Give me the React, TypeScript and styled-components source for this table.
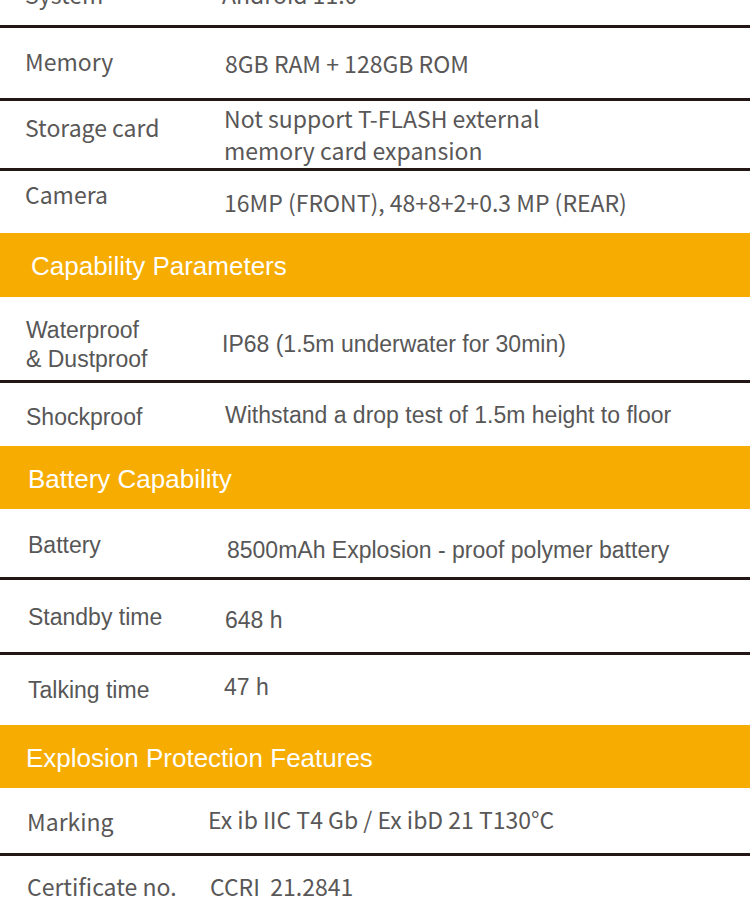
import React from 'react';
import styled, {createGlobalStyle} from "styled-components";

const GlobalStyle = createGlobalStyle`
    html, body {
        margin: 0;
        padding: 0;
        background: #fff;
    }
    body {
        width: 750px;
        overflow: hidden;
    }
`

type FontKind = 'hans' | 'arial'

// font stacks + numbers used to put a baseline where the picture has it
const fonts = {
    hans: {family: `"Noto Sans CJK SC", "Noto Sans", sans-serif`, size: 23, asc: 1.16, desc: 0.288},
    arial: {family: `"Liberation Sans", Arial, sans-serif`, size: 23, asc: 0.905, desc: 0.212},
}
const LINE = 29

const baselineOffset = (kind: FontKind, lh: number) => {
    const f = fonts[kind]
    return (lh - (f.asc + f.desc) * f.size) / 2 + f.asc * f.size
}

const Page = styled.div`
    width: 750px;
    margin-top: -42px;
    background: #fff;
`
const Section = styled.section`
    display: flex;
    flex-direction: column;
`
const Header = styled.div<{ $x: number; $b: number }>`
    height: 64px;
    box-sizing: border-box;
    background: #f6ac00;
    color: #fff;
    font-family: "Liberation Sans", Arial, sans-serif;
    font-size: 26px;
    line-height: 30px;
    padding-left: ${p => p.$x}px;
    padding-top: ${p => p.$b - ((30 - 1.117 * 26) / 2 + 0.905 * 26)}px;
    white-space: nowrap;
`
const Row = styled.div<{ $h: number; $line?: boolean }>`
    display: flex;
    height: ${p => p.$h}px;
    box-sizing: border-box;
    border-bottom: ${p => (p.$line ? '3px solid #231815' : 'none')};
`
const Cell = styled.div<{ $font: FontKind; $x: number; $b: number; $lh: number }>`
    font-family: ${p => fonts[p.$font].family};
    font-size: ${p => fonts[p.$font].size}px;
    line-height: ${p => p.$lh}px;
    color: ${p => (p.$font === 'hans' ? '#595757' : '#575757')};
    padding-top: ${p => p.$b - baselineOffset(p.$font, p.$lh)}px;
    white-space: pre;
`
const Label = styled(Cell)`
    width: ${p => 200 - p.$x}px;
    flex: none;
    padding-left: ${p => p.$x}px;
`
const Value = styled(Cell)`
    padding-left: ${p => p.$x - 200}px;
`

type Spec = {
    h: number
    line?: boolean
    label: string[]
    lx: number
    lb: number
    llh?: number
    value: string[]
    vx: number
    vb: number
    vlh?: number
}

type Block = { title?: { text: string; x: number; b: number; h: number }; font: FontKind; rows: Spec[] }

const blocks: Block[] = [
    {
        font: 'hans',
        rows: [
            {h: 70, line: true, label: ['System'], lx: 25, lb: 47, value: ['Android 11.0'], vx: 222, vb: 47},
            {h: 73, line: true, label: ['Memory'], lx: 25, lb: 44, value: ['8GB RAM + 128GB ROM'], vx: 225, vb: 46},
            {
                h: 70, line: true, label: ['Storage card'], lx: 25, lb: 37,
                value: ['Not support T-FLASH external', 'memory card expansion'], vx: 224, vb: 27, vlh: 32
            },
            {h: 62, label: ['Camera'], lx: 25, lb: 34, value: ['16MP (FRONT), 48+8+2+0.3 MP (REAR)'], vx: 224, vb: 42},
        ],
    },
    {
        title: {text: 'Capability Parameters', x: 31, b: 42, h: 64},
        font: 'arial',
        rows: [
            {
                h: 86, line: true, label: ['Waterproof', '& Dustproof'], lx: 26, lb: 41, llh: 29,
                value: ['IP68 (1.5m underwater for 30min)'], vx: 222, vb: 55
            },
            {h: 63, label: ['Shockproof'], lx: 26, lb: 42, value: ['Withstand a drop test of 1.5m height to floor'], vx: 225, vb: 40},
        ],
    },
    {
        title: {text: 'Battery Capability', x: 28, b: 42, h: 63},
        font: 'arial',
        rows: [
            {h: 71, line: true, label: ['Battery'], lx: 28, lb: 44, value: ['8500mAh Explosion - proof polymer battery'], vx: 227, vb: 49},
            {h: 75, line: true, label: ['Standby time'], lx: 28, lb: 45, value: ['648 h'], vx: 225, vb: 48},
            {h: 70, label: ['Talking time'], lx: 28, lb: 43, value: ['47 h'], vx: 224, vb: 40},
        ],
    },
    {
        title: {text: 'Explosion Protection Features', x: 26, b: 42, h: 63},
        font: 'hans',
        rows: [
            {h: 68, line: true, label: ['Marking'], lx: 27, lb: 44, value: ['Ex ib IIC T4 Gb / Ex ibD 21 T130°C'], vx: 208, vb: 42},
            {h: 80, label: ['Certificate no.'], lx: 27, lb: 41, value: ['CCRI  21.2841'], vx: 210, vb: 41},
        ],
    },
]

export default function App() {
    return (
        <>
            <GlobalStyle/>
            <Page>
                {blocks.map((block, i) => (
                    <Section key={i}>
                        {block.title && (
                            <Header $x={block.title.x} $b={block.title.b} style={{height: block.title.h}}>
                                {block.title.text}
                            </Header>
                        )}
                        {block.rows.map((row, j) => (
                            <Row key={j} $h={row.h} $line={row.line}>
                                <Label $font={block.font} $x={row.lx} $b={row.lb} $lh={row.llh ?? LINE}>
                                    {row.label.join('\n')}
                                </Label>
                                <Value $font={block.font} $x={row.vx} $b={row.vb} $lh={row.vlh ?? LINE}>
                                    {row.value.join('\n')}
                                </Value>
                            </Row>
                        ))}
                    </Section>
                ))}
            </Page>
        </>
    )
}
